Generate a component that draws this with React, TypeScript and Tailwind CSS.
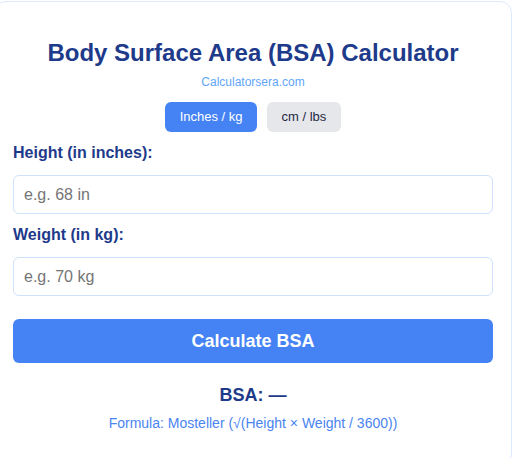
import { useState } from 'react';

const App = () => {
  const [unit, setUnit] = useState<'in' | 'cm'>('in');
  const [height, setHeight] = useState('');
  const [weight, setWeight] = useState('');
  const [bsa, setBsa] = useState<string | null>(null);

  const calculate = () => {
    let h = parseFloat(height);
    let w = parseFloat(weight);
    if (!h || !w) {
      setBsa(null);
      return;
    }
    if (unit === 'in') h = h * 2.54;
    else w = w * 0.453592;
    setBsa(Math.sqrt((h * w) / 3600).toFixed(2) + ' m²');
  };

  return (
    <div className="min-h-screen bg-white font-['Liberation_Sans',Arial,sans-serif] overflow-hidden">
      <div className="-ml-[6px] mt-px w-[518px] rounded-xl border border-[#dbeafe] bg-white px-[18px] pt-[35px] pb-8">
        <h2 className="text-center text-2xl leading-8 font-bold text-[#1e3a8a]">
          Body Surface Area (BSA) Calculator
        </h2>
        <p className="mt-[5px] text-center text-xs leading-4 text-[#60a5fa]">Calculatorsera.com</p>

        <div className="mt-3 flex justify-center gap-[10px]">
          <button
            onClick={() => setUnit('in')}
            className={`h-[30px] rounded-md px-[14.5px] text-[13px] ${
              unit === 'in' ? 'bg-[#4583f5] text-white' : 'bg-[#e5e7eb] text-[#1f2a44]'
            }`}
          >
            Inches / kg
          </button>
          <button
            onClick={() => setUnit('cm')}
            className={`h-[30px] rounded-md px-[14.5px] text-[13px] ${
              unit === 'cm' ? 'bg-[#4583f5] text-white' : 'bg-[#e5e7eb] text-[#1f2a44]'
            }`}
          >
            cm / lbs
          </button>
        </div>

        <label className="mt-[9px] block text-base leading-6 font-bold text-[#1e3a8a]">
          {unit === 'in' ? 'Height (in inches):' : 'Height (in cm):'}
        </label>
        <input
          type="number"
          value={height}
          onChange={(e) => setHeight(e.target.value)}
          placeholder={unit === 'in' ? 'e.g. 68 in' : 'e.g. 173 cm'}
          className="mt-[10px] block h-[39px] w-full rounded-md border border-[#cfe1fc] px-[10px] text-base text-gray-800 outline-none placeholder:text-[#757575]"
        />

        <label className="mt-[9px] block text-base leading-6 font-bold text-[#1e3a8a]">
          {unit === 'in' ? 'Weight (in kg):' : 'Weight (in lbs):'}
        </label>
        <input
          type="number"
          value={weight}
          onChange={(e) => setWeight(e.target.value)}
          placeholder={unit === 'in' ? 'e.g. 70 kg' : 'e.g. 154 lbs'}
          className="mt-[10px] block h-[39px] w-full rounded-md border border-[#cfe1fc] px-[10px] text-base text-gray-800 outline-none placeholder:text-[#757575]"
        />

        <button
          onClick={calculate}
          className="mt-[23px] block h-[44px] w-full rounded-md bg-[#4583f5] text-lg font-bold text-white"
        >
          Calculate BSA
        </button>

        <div className="mt-[18px] text-center text-lg leading-7 font-bold text-[#1e3a8a]">
          BSA: {bsa ?? '—'}
        </div>
        <p className="mt-1 text-center text-sm leading-5 text-[#4a84f0]">
          Formula: Mosteller (√(Height × Weight / 3600))
        </p>
      </div>
    </div>
  );
};

export default App;
